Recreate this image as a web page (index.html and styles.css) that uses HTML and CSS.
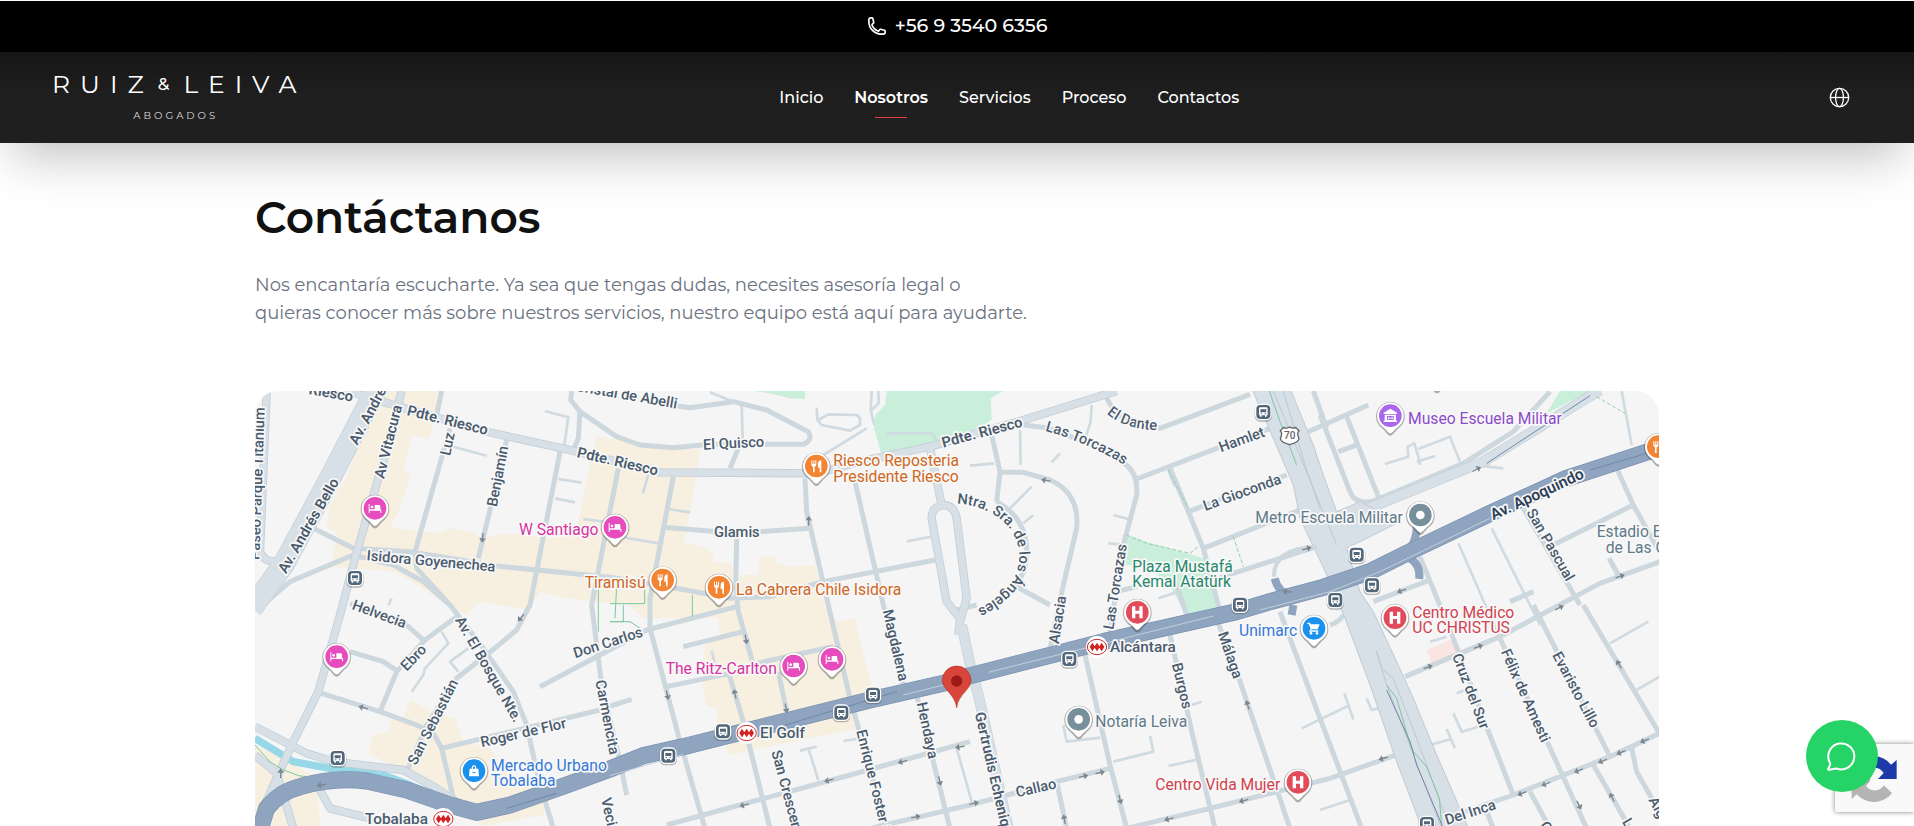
FILE: index.html
```html
<!DOCTYPE html>
<html lang="es">
<head>
<meta charset="utf-8">
<meta name="viewport" content="width=device-width, initial-scale=1">
<title>Contáctanos | Ruiz &amp; Leiva Abogados</title>
<link rel="stylesheet" href="styles.css">
</head>
<body>
<header class="header">
  <div class="topbar">
    <a class="phone" href="tel:+56935406356">
      <svg class="phone-icon" viewBox="0 0 24 24" aria-hidden="true"><path d="M2.25 6.75c0 8.28 6.72 15 15 15h2.25a2.25 2.25 0 0 0 2.25-2.25v-1.37c0-.52-.35-.97-.85-1.1l-4.43-1.1c-.44-.11-.9.05-1.17.41l-.97 1.3c-.28.37-.77.53-1.21.37a12 12 0 0 1-7.14-7.14c-.16-.44 0-.93.37-1.21l1.3-.97c.36-.27.52-.73.41-1.17l-1.1-4.43a1.13 1.13 0 0 0-1.1-.84H4.5A2.25 2.25 0 0 0 2.25 4.5z"/></svg>
      <span>+56 9 3540 6356</span>
    </a>
  </div>
  <div class="navbar">
    <a class="logo" href="#" aria-label="Ruiz &amp; Leiva Abogados">
      <span class="logo-name">RUIZ<span class="logo-amp">&amp;</span>LEIVA</span>
      <span class="logo-sub">ABOGADOS</span>
    </a>
    <nav class="nav" aria-label="Principal">
      <a href="#">Inicio</a>
      <a href="#" class="active">Nosotros</a>
      <a href="#">Servicios</a>
      <a href="#">Proceso</a>
      <a href="#">Contactos</a>
    </nav>
    <div class="lang">
      <button type="button" class="lang-button" aria-label="Idioma">
        <svg viewBox="0 0 24 24" aria-hidden="true"><circle cx="12" cy="12" r="10.5"/><ellipse cx="12" cy="12" rx="4.5" ry="10.5"/><path d="M1.5 12h21"/></svg>
      </button>
    </div>
  </div>
</header>

<main class="content">
  <h1 class="title">Contáctanos</h1>
  <p class="lead">Nos encantaría escucharte. Ya sea que tengas dudas, necesites asesoría legal o<br>quieras conocer más sobre nuestros servicios, nuestro equipo está aquí para ayudarte.</p>
  <div class="map">
    <svg class="map-canvas" viewBox="15 18 4212 1305" preserveAspectRatio="xMidYMin slice" role="img" aria-label="Mapa de la oficina">
      <defs>
        <g id="pin"><path class="pin-shadow" d="M0 60C-8 60-14 46-29 34A43 43 0 1 1 29 34C14 46 8 60 0 60z"/><path class="pin-body" d="M0 53C-6 53-12 41-27 30A40 40 0 1 1 27 30C12 41 6 53 0 53z"/><circle r="34" fill="currentColor"/></g>
        <g id="hotel" class="c-hotel"><use href="#pin"/><path class="glyph" d="M-19-13h3V7h32V-6q0-4-4-4H-1V3h-15v5h-3zM16 4h3v10h-3zM-19 5h3v9h-3z"/><circle class="glyph" cx="-9" cy="-4" r="4"/></g>
        <g id="food" class="c-food"><use href="#pin"/><path class="glyph" d="M-15-17h3v11h3v-11h3v11h3v-11h3v13q0 5-5 6v17h-5V2q-5-1-5-6zM5-10q2-7 10-7v36h-5V5H5z"/></g>
        <g id="hospital" class="c-health"><use href="#pin"/><path class="glyph" d="M-16-18h10V-5H6v-13h10v36H6V4H-6v14h-10z"/></g>
        <g id="dot" class="c-place"><use href="#pin"/><circle class="glyph" r="13"/></g>
        <g id="bus"><rect class="bus-shadow" x="-26" y="-23" width="52" height="51" rx="16"/><rect class="bus-box" x="-23" y="-24" width="46" height="46" rx="14"/><path class="glyph" fill-rule="evenodd" d="M-13-11q0-4 5-4H8q5 0 5 4V9h-3v4H5V9H-5v4h-5V9h-3zM-9-9V0H9v-9zM-8 3h4v3h-4zM4 3h4v3H4z"/></g>
        <g id="metro"><circle class="glyph" r="33"/><ellipse class="metro-ring" rx="29" ry="23"/><path class="metro-mark" d="M-14-13l7 11 7-11 7 11 7-11 8 13-8 13-7-11-7 11-7-11-7 11-8-13z"/></g>
        <path id="arrow" class="arrow" d="M-14-2H2v-8L15 0 2 10V2h-16z"/>
        <path id="torcazas" d="M2385 137Q2520 175 2640 250"/>
        <path id="dante" d="M2570 85Q2630 140 2750 135"/>
        <path id="angeles" d="M2121 356C2230 362 2306 430 2308 510C2308 600 2240 645 2160 685"/>
      </defs>
      <rect class="land" x="0" y="0" width="4260" height="1540"/>
      <path class="beige" d="M395 18H580L535 160 485 152 460 262 482 268 440 395 425 405 430 430 570 445 600 430 660 440 700 460 770 445 900 460 975 450 1040 155 1350 195 1325 350 1300 470 1360 485 1390 510V530L1445 535 1450 570H1525L1530 515H1575L1580 535 1620 545 1695 540 1730 660 1760 710 1815 700 1840 810 1865 900 1820 1000 1825 1030 1435 1110 1420 1035 1405 1030 1400 970 1370 960 1355 900 1370 870 1360 810 1370 780 1410 750 1405 700H1180L1135 660 1080 655 950 640 870 620 835 675 690 650 650 690 610 670 440 560 245 545 260 440 230 430 240 360 290 275 350 120z"/>
      <path class="beige" d="M480 945L555 985 615 1000 640 1070 720 1090 780 1180 900 1210 880 1290 700 1323 620 1260 460 1160 355 1105 370 1050 415 1040 425 1005 460 1000zM15 1080L100 1120 200 1180 210 1330H15z"/>
      <path class="green" d="M1910 18H2260L2222 40 2225 105 2160 145 1895 210 1872 130 1875 90 1905 60zM1510 18H1665V42L1620 40 1560 25zM2630 450L2690 470 2860 520 2880 580 2905 670 2810 695 2760 600 2690 540 2625 540zM3930 18H4030L3970 45 3890 85z"/>
      <path class="pink" d="M3530 795L3610 760 3625 800 3545 840z"/>
      <g class="lanes">
        <path d="M610 185L710 212M925 282L995 293M915 340L975 352M885 78L955 97 940 200M1000 402L1100 415M1125 458L1225 475M1255 372L1320 382M1195 270L1178 325M1380 22L1450 50M1475 60L1478 160M575 740L595 775 525 850 520 870 485 920M655 790L600 830 625 860M1650 1097L1700 1085M1675 1090L1705 1185M1780 1068L1830 1060M2120 1090L2165 1250M2280 370L2345 305M2320 415L2350 390M2310 135L2312 240M2160 242L2232 235M2590 390L2635 402M2575 475L2630 480M2725 640L2780 622M2590 1130L2710 1100 2700 1052M2755 1143L2845 1123M2440 1020L2450 1070 2550 1058M2825 960L2855 950M3155 1030L3300 960M3283 925L3310 1003M3350 940L3365 975 3385 970M3620 925L3660 910M3610 985L3635 1040 3685 1025M3590 1032L3615 1090M3600 1063L3540 1080M3540 770L3590 755M3210 1275L3300 1245M4080 775L4195 710M4160 915L4228 875M3405 237L3475 215 3473 185 3493 175 3505 215 3510 240M3500 230L3555 213M3505 192L3600 155 3630 230M3760 250L3630 235M1700 68L1702 105 1715 120 1800 137 1830 120 1830 100 1820 90 1735 88 1705 105M1720 210L1850 130M1970 469L2045 455M1865 18L1862 75 1873 120M1885 18L1886 55 1865 75M2525 60L2522 110 2500 180M2430 205L2405 232M725 300L730 290M3725 430L3830 640 3870 720M3625 475L3715 680 3750 760M2755 255L2775 305M1385 797L1395 840M4115 18L4145 180M415 660L425 640M1910 145H2035Q2055 145 2058 170"/>
      </g>
      <g class="streets">
        <path d="M575 18L560 90M600 130L495 500 500 550 600 660 700 790 790 920 830 1020 865 1180 910 1330M770 165L685 520M930 200L840 660 800 735 740 785 620 880 530 1020 470 1160M190 430L310 490 480 500 740 543 1080 577 1280 610 1440 640 1560 635 1720 590 2055 525M50 650L120 590 310 510 430 540 520 590 600 660"/>
        <path d="M965 18L962 45 990 80 985 160 970 195M990 80L1100 155 1170 180 1270 188 1380 178 1660 178Q1690 165 1675 140L1550 75 1450 50 1320 68 1260 60M1478 160L1440 250M1270 275L1200 640V730L1290 1070 1365 1330M1105 250L1025 660 1055 900 1110 1130 1130 1230M1240 427L1460 445 1680 430M1460 460L1457 600 1465 680 1510 840M1435 860L1480 1010 1560 1330M1665 280L1670 380 1735 660 1800 940 1820 1010 1910 1330M1815 290L1900 660 1960 900M2000 930L2100 1330"/>
        <path d="M300 655L470 720 525 770M620 695L525 765 440 860 390 980M300 800L400 830 445 860M205 922L390 980 500 1020 550 1045 575 1090 615 1260M575 1090L1050 975M1075 965L1145 943M870 905L1040 815 1190 735 1460 665M1300 785L1480 740M1250 905L1440 865M1520 835L1750 785M1585 860L1610 980M2160 1070L1800 1170 1250 1320M1860 1330L2160 1260 2420 1190 2580 1150M2420 1190L2450 1330"/>
        <path d="M2225 150L2250 260 2240 350M2250 262H2320L2400 285Q2490 325 2480 430L2440 600 2400 790M2320 120L2400 130 2550 190 2630 240Q2665 270 2660 330L2620 480 2580 740M2660 282L2900 190 3060 130M2570 40L2600 90 2730 130 3000 28M2760 250L2815 380 2860 490 2910 680M2815 380L3110 270M2860 490L3150 375M2910 578L3200 485M2240 350Q2330 400 2330 500T2230 660M2300 605L2400 660M2600 620L2660 605M2780 600L2810 690M2505 810L2580 1140 2630 1330M2760 750L2830 1060 2895 1330M2905 715L2960 860 3120 1330M3090 680L3210 1000 3335 1330M2630 1330L2880 1270 3240 1180 3480 1095M3240 720Q3270 710 3280 690M2100 680L2180 660"/>
        <path d="M3175 140L3355 60M3190 18L3230 130M3210 90L3300 320Q3315 360 3370 348L3640 235 3790 140 3900 20M3290 95L3385 335M3265 200L3320 180M4100 250L4150 360 4228 500M3910 480L4150 360M3820 370L3990 660M3510 515L3610 760 3700 1000 3790 1230M3540 585L3370 650M4230 530L4050 595 3750 755 3465 875M4077 520L4105 570M3750 760L4010 1330M3850 660L4080 1115M4000 660L4228 1045M4228 1045L4080 1115 3790 1230 3560 1310M4030 1140L4140 1330M4145 1090L4160 1160 4228 1280M3840 1220L3900 1330M3710 1280L3730 1330M3780 650L3850 620"/>
      </g>
      <path class="river" d="M15 1060L130 1130 240 1150 380 1162 480 1200 620 1260"/>
      <g class="casing">
        <path class="w-xl" d="M380 10L240 280 100 540 5 670"/>
        <path class="w-m" d="M50 18L30 500Q40 530 80 530M455 18L400 230 370 330 315 520 270 690 205 920 125 1080 80 1180 40 1270M15 1025L170 1105 250 1130 460 1155 560 1210 640 1265M15 1110L80 1165 130 1330M210 1215L240 1270 380 1305M270 10L380 45 700 138 960 195 1230 262 1700 265 1850 225 2040 185 2320 105 2600 18M2040 190L2075 360M2125 750L2130 700 2090 650 2045 400Q2045 365 2080 360 2115 362 2120 400L2150 640 2130 710"/>
        <path class="w-l" d="M2135 720L2165 860 2185 930 2275 1330M3270 405L3700 230 4050 15"/>
      </g>
      <g class="avenues">
        <path class="w-xl" d="M380 10L240 280 100 540 5 670"/>
        <path class="w-m" d="M50 18L30 500Q40 530 80 530M455 18L400 230 370 330 315 520 270 690 205 920 125 1080 80 1180 40 1270M15 1025L170 1105 250 1130 460 1155 560 1210 640 1265M15 1110L80 1165 130 1330M210 1215L240 1270 380 1305M270 10L380 45 700 138 960 195 1230 262 1700 265 1850 225 2040 185 2320 105 2600 18M2040 190L2075 360M2125 750L2130 700 2090 650 2045 400Q2045 365 2080 360 2115 362 2120 400L2150 640 2130 710"/>
        <path class="w-l" d="M2135 720L2165 860 2185 930 2275 1330M3270 405L3700 230 4050 15"/>
      </g>
      <path class="ring-road" d="M3005 10L3130 300 3150 400 3240 590 3285 700 3360 900 3440 1130 3520 1340H3660L3560 1110 3490 940 3440 830 3370 680 3330 620 3290 490 3450 410 3330 350 3260 380 3220 270 3190 180 3120 10z"/>
      <path class="land" d="M3296 486L3470 425 3486 445 3480 465 3310 535z"/>
      <path class="lane-line" d="M3070 18L3260 480M3100 18L3165 240 3210 370M3380 800L3395 850 3430 880 3500 1060 3600 1330M3380 800L3410 900 3575 1330"/>
      <path class="trail" d="M3058 18L3090 110 3140 240M3410 900L3440 940 3478 1070 3490 1100 3530 1145 3568 1240 3575 1320M15 1080L60 1130 100 1155 150 1173 205 1177M1045 610V740M1100 600L1095 700M1184 600V656H1080M1120 660V710H1080M1327 630V695M1080 710H1140L1170 730"/>
      <path class="dashes" d="M2630 450L2690 475 2820 505 2845 485M2755 255L2815 370M2950 455L2980 545M4040 35L4125 85"/>
      <path class="highway-line" d="M3410 915L3480 1070 3500 1140 3580 1330M3710 235L4020 32"/>
      <path class="ramp" d="M3200 485Q3070 490 3072 575"/>
      <path class="ramp-blue" d="M3074 580Q3085 625 3130 635M3500 420Q3502 460 3480 490M3480 520Q3512 540 3508 582M3130 660L3125 690"/>
      <path class="highway-edge" d="M25 1350L50 1270Q90 1220 150 1205 250 1175 350 1188L470 1215 600 1260 680 1282 780 1260 950 1200 1080 1152 1180 1112 1300 1085 1500 1035 1860 945 2100 890 2160 872 2560 770 2960 680 3060 650 3210 610 3360 560 3490 495 3710 390 3950 280 4240 185"/>
      <path class="highway" d="M25 1350L50 1270Q90 1220 150 1205 250 1175 350 1188L470 1215 600 1260 680 1282 780 1260 950 1200 1080 1152 1180 1112 1300 1085 1500 1035 1860 945 2100 890 2160 872 2560 770 2960 680 3060 650 3210 610 3360 560 3490 495 3710 390 3950 280 4240 185"/>
      <path class="highway-line" d="M770 1270L920 1225M1540 1040L1940 920M4020 255L4190 205"/>
      <path class="median" d="M1080 1172L1300 1108M1960 930L2080 900M2215 862L2890 693M3030 675L3240 620 3390 560 3720 400"/>
      <g>
        <use href="#arrow" transform="translate(698 458) rotate(95)"/><use href="#arrow" transform="translate(813 698) rotate(130)"/><use href="#arrow" transform="translate(340 968) rotate(196)"/><use href="#arrow" transform="translate(92 1165) rotate(-90)"/><use href="#arrow" transform="translate(215 1200) rotate(170)"/><use href="#arrow" transform="translate(1676 408) rotate(-88)"/><use href="#arrow" transform="translate(1488 763) rotate(80)"/><use href="#arrow" transform="translate(1252 930) rotate(78)"/><use href="#arrow" transform="translate(1455 927) rotate(-103)"/><use href="#arrow" transform="translate(1608 970) rotate(80)"/><use href="#arrow" transform="translate(2130 1086) rotate(170)"/><use href="#arrow" transform="translate(1958 1130) rotate(165)"/><use href="#arrow" transform="translate(1737 1186) rotate(165)"/><use href="#arrow" transform="translate(1483 1260) rotate(165)"/><use href="#arrow" transform="translate(1997 1296) rotate(-12)"/><use href="#arrow" transform="translate(2069 1188) rotate(77)"/><use href="#arrow" transform="translate(2388 286) rotate(190)"/><use href="#arrow" transform="translate(3170 491) rotate(-15)"/><use href="#arrow" transform="translate(3112 620) rotate(185)"/><use href="#arrow" transform="translate(2993 960) rotate(-108)"/><use href="#arrow" transform="translate(2500 1174) rotate(-13)"/><use href="#arrow" transform="translate(2550 1163) rotate(-13)"/><use href="#arrow" transform="translate(2610 1243) rotate(77)"/><use href="#arrow" transform="translate(2443 1303) rotate(-100)"/><use href="#arrow" transform="translate(2981 1247) rotate(165)"/><use href="#arrow" transform="translate(2757 1302) rotate(165)"/><use href="#arrow" transform="translate(3680 253) rotate(-28)"/><use href="#arrow" transform="translate(4110 574) rotate(-18)"/><use href="#arrow" transform="translate(3455 617) rotate(160)"/><use href="#arrow" transform="translate(3534 846) rotate(-20)"/><use href="#arrow" transform="translate(3685 785) rotate(-20)"/><use href="#arrow" transform="translate(3928 668) rotate(-27)"/><use href="#arrow" transform="translate(4107 838) rotate(-120)"/><use href="#arrow" transform="translate(3400 1120) rotate(165)"/><use href="#arrow" transform="translate(3816 1225) rotate(158)"/><use href="#arrow" transform="translate(3888 1197) rotate(158)"/><use href="#arrow" transform="translate(3986 1157) rotate(158)"/><use href="#arrow" transform="translate(4058 1128) rotate(158)"/><use href="#arrow" transform="translate(4113 1102) rotate(158)"/><use href="#arrow" transform="translate(4184 1067) rotate(158)"/><use href="#arrow" transform="translate(3987 1260) rotate(62)"/><use href="#arrow" transform="translate(4086 1237) rotate(-118)"/><use href="#arrow" transform="translate(2172 1255) rotate(-12)"/>
      </g>
      <g class="street-label">
        <text class="major" transform="translate(175 27) rotate(10)">Riesco</text>
        <text class="major" transform="translate(322 182) rotate(-62)">Av. Andrés</text>
        <text class="major" transform="translate(402 283) rotate(-76)">Av Vitacura</text>
        <text class="major" transform="translate(108 568) rotate(-60)">Av. Andrés Bello</text>
        <text transform="translate(28 525) rotate(-88)">Paseo Parque Titanium</text>
        <text class="major" transform="translate(469 90) rotate(14)">Pdte. Riesco</text>
        <text class="major" transform="translate(979 216) rotate(13)">Pdte. Riesco</text>
        <text class="major" transform="translate(2080 188) rotate(-15)">Pdte. Riesco</text>
        <text class="major main" transform="translate(3730 406) rotate(-25)">Av. Apoquindo</text>
        <text transform="translate(600 214) rotate(-78)">Luz</text>
        <text transform="translate(740 367) rotate(-79)">Benjamín</text>
        <text transform="translate(349 526) rotate(5)">Isidora Goyenechea</text>
        <text transform="translate(304 672) rotate(20)">Helvecia</text>
        <text transform="translate(470 860) rotate(-46)">Ebro</text>
        <text transform="translate(614 705) rotate(60)">Av. El Bosque Nte.</text>
        <text transform="translate(498 1143) rotate(-63)">San Sebastián</text>
        <text transform="translate(695 1087) rotate(-13)">Roger de Flor</text>
        <text transform="translate(976 820) rotate(-18)">Don Carlos</text>
        <text transform="translate(1036 888) rotate(79)">Carmencita</text>
        <text transform="translate(1053 1242) rotate(77)">Vecinal</text>
        <text transform="translate(975 17) rotate(10)">Cristal de Abelli</text>
        <text transform="translate(1360 194) rotate(-3)">El Quisco</text>
        <text transform="translate(1392 457)">Glamis</text>
        <text transform="translate(1898 677) rotate(77)">Magdalena</text>
        <text transform="translate(2000 955) rotate(78)">Hendaya</text>
        <text transform="translate(1564 1100) rotate(75)">San Crescente</text>
        <text transform="translate(1819 1038) rotate(76)">Enrique Foster Sur</text>
        <text class="major" transform="translate(2174 985) rotate(77)">Gertrudis Echenique</text>
        <text transform="translate(2301 1237) rotate(-13)">Callao</text>
        <text><textPath href="#torcazas">Las Torcazas</textPath></text>
        <text><textPath href="#dante">El Dante</textPath></text>
        <text><textPath href="#angeles">Ntra. Sra. de los Ángeles</textPath></text>
        <text transform="translate(2913 202) rotate(-20)">Hamlet</text>
        <text transform="translate(2866 378) rotate(-20)">La Gioconda</text>
        <text transform="translate(2426 778) rotate(-81)">Alsacia</text>
        <text transform="translate(2590 735) rotate(-81)">Las Torcazas</text>
        <text transform="translate(2765 838) rotate(76)">Burgos</text>
        <text transform="translate(2903 746) rotate(71)">Málaga</text>
        <text transform="translate(3828 382) rotate(60)">San Pascual</text>
        <text transform="translate(3606 812) rotate(69)">Cruz del Sur</text>
        <text transform="translate(3752 800) rotate(66)">Félix de Amesti</text>
        <text transform="translate(3906 810) rotate(62)">Evaristo Lillo</text>
        <text transform="translate(3590 1320) rotate(-18)">Del Inca</text>
        <text transform="translate(4195 1245) rotate(62)">Algarrobo</text>
        <text transform="translate(4115 1310) rotate(60)">Latadía</text>
        <text transform="translate(3868 1320) rotate(60)">Orinoco</text>
      </g>
      <g class="station-label">
        <text x="345" y="1318">Tobalaba</text><text x="1530" y="1060">El Golf</text><text x="2580" y="802">Alcántara</text>
      </g>
      <g class="place-label">
        <g class="c-hotel"><text x="807" y="450">W Santiago</text><text x="1247" y="866">The Ritz-Carlton</text></g>
        <g class="c-food"><text x="1004" y="608">Tiramisú</text><text x="1458" y="630">La Cabrera Chile Isidora</text><text x="1750" y="243">Riesco Reposteria</text><text x="1750" y="290">Presidente Riesco</text></g>
        <g class="c-shop"><text x="723" y="1157">Mercado Urbano</text><text x="723" y="1203">Tobalaba</text><text x="2967" y="754">Unimarc</text></g>
        <g class="c-health"><text x="3487" y="698">Centro Médico</text><text x="3487" y="745">UC CHRISTUS</text><text x="2716" y="1216">Centro Vida Mujer</text></g>
        <g class="c-park"><text x="2647" y="560">Plaza Mustafá</text><text x="2647" y="606">Kemal Atatürk</text></g>
        <g class="c-museum"><text x="3474" y="116">Museo Escuela Militar</text></g>
        <g class="c-place"><text x="2536" y="1027">Notaría Leiva</text><text x="3016" y="413">Metro Escuela Militar</text><text x="4040" y="456">Estadio Español</text><text x="4067" y="503">de Las Condes</text></g>
      </g>
      <g>
        <use href="#bus" x="315" y="580"/><use href="#bus" x="263" y="1120"/><use href="#bus" x="1255" y="1113"/><use href="#bus" x="1419" y="1040"/><use href="#bus" x="1774" y="984"/><use href="#bus" x="1869" y="930"/><use href="#bus" x="2458" y="823"/><use href="#bus" x="3040" y="82"/><use href="#bus" x="2970" y="660"/><use href="#bus" x="3320" y="510"/><use href="#bus" x="3366" y="602"/><use href="#bus" x="3256" y="646"/><use href="#bus" x="3531" y="1318"/>
        <use href="#metro" x="580" y="1302"/><use href="#metro" x="1490" y="1044"/><use href="#metro" x="2541" y="786"/>
        <use href="#hotel" x="375" y="370"/><use href="#hotel" x="260" y="815"/><use href="#hotel" x="1095" y="427"/><use href="#hotel" x="1631" y="843"/><use href="#hotel" x="1746" y="823"/>
        <use href="#food" x="1238" y="585"/><use href="#food" x="1407" y="607"/><use href="#food" x="1699" y="243"/><use href="#food" x="4225" y="185"/>
        <use href="#hospital" x="2662" y="682"/><use href="#hospital" x="3435" y="698"/><use href="#hospital" x="3144" y="1192"/>
        <use href="#dot" x="2486" y="1003"/><use href="#dot" x="3511" y="390"/><use href="#dot" x="3561" y="-35"/>
        <g class="c-museum" transform="translate(3421 92)"><use href="#pin"/><path class="glyph" fill-rule="evenodd" d="M0-21L20-9V-5H-20V-9zM-17-3H17V15H20V19H-20V15H-17zM-10 1V13H10V1zM-7 11V3L0 7 7 3V11H4V7L0 10-4 7V11z"/></g>
        <g class="c-shop" transform="translate(672 1157)"><use href="#pin"/><path class="glyph" fill-rule="evenodd" d="M-15 17L-13-6H-7V-9Q-6-17 0-17T7-9V-6H13L15 17zM-3-6H3V-9Q2-13 0-13T-3-9zM-6 3Q0 13 6 3H3Q0 7-3 3z"/></g>
        <g class="c-shop" transform="translate(3192 730)"><use href="#pin"/><path class="glyph" d="M-20-17H-12L-10-12H17L11 3H-7L-9 6H13V10H-15L-10 1-16-13H-20z"/><circle class="glyph" cx="-9" cy="15" r="4"/><circle class="glyph" cx="9" cy="15" r="4"/></g>
        <g transform="translate(3119 152)"><path class="shield" d="M-18-25Q-10-20 0-26 10-20 18-25L28-15Q20-7 28 8 28 20 0 27-28 20-28 8-20-7-28-15z"/><text class="shield-text" y="11">70</text></g>
        <g transform="translate(2120 888)"><path class="marker" d="M0 80C-4 40-43 26-43-2A43 43 0 1 1 43-2C43 26 4 40 0 80z"/><circle class="marker-core" r="17"/></g>
      </g>
    </svg>
  </div>
</main>

<aside class="recaptcha" aria-label="reCAPTCHA">
  <svg viewBox="-72 -72 144 144" aria-hidden="true"><path class="rc-light" d="M-69 0A69 69 0 0 1 0-69V-30A30 30 0 0 0-24-16L-12 0z"/><path class="rc-blue" d="M0-69A69 69 0 0 1 51-43L68-57V0H12L29-18A34 34 0 0 0 0-34z"/><path class="rc-gray" d="M-67 0V60L-52 46A70 70 0 0 0 54 43L30 19A32 32 0 0 1-24 20L-14 10-10 0z"/></svg>
</aside>
<a class="whatsapp" href="#" aria-label="WhatsApp">
  <svg viewBox="0 0 32 32" aria-hidden="true"><path d="M3.300 21.500A13 13 0 1 1 10.500 28.500L3.200 29.800Q1.800 30 2.300 28.600L4.200 24.600Q4.500 23.800 3.300 21.500z"/></svg>
</a>
</body>
</html>
```

FILE: styles.css
```css
* { box-sizing: border-box; }
body {
  display: flex;
  flex-direction: column;
  margin: 0;
  padding-top: 1px;
  min-height: 100vh;
  background: #fff;
  color: #111;
  font-family: Montserrat, Inter, "Open Sans", sans-serif;
}
a { color: inherit; text-decoration: none; }

.header { position: relative; box-shadow: 0 25px 50px -12px rgba(0, 0, 0, .25); }
.topbar {
  display: flex;
  justify-content: center;
  align-items: center;
  height: 51px;
  background: #000;
  color: #fff;
}
.phone { display: flex; align-items: center; gap: 8px; padding-bottom: 2px; font-size: 19px; font-weight: 500; line-height: 28px; }
.phone-icon { width: 20px; height: 20px; fill: none; stroke: currentColor; stroke-width: 2; stroke-linejoin: round; }
.navbar {
  display: flex;
  justify-content: space-between;
  align-items: center;
  height: 91px;
  padding: 0 64px 0 52px;
  background: linear-gradient(#161616, #1f1f1f 50%);
  color: #fff;
}
.logo { display: flex; flex-direction: column; align-items: center; gap: 14px; margin-top: -2px; }
.logo-name { display: flex; align-items: center; font-size: 25px; line-height: 24px; letter-spacing: 10px; margin-right: -10px; }
.logo-amp { margin: 0 4px; font-size: 17px; font-weight: 500; }
.logo-sub { font-size: 10px; line-height: 12px; letter-spacing: 3px; margin-right: -3px; color: #ddd; }
.nav { display: flex; gap: 31px; font-size: 16px; font-weight: 500; line-height: 24px; }
.nav .active { position: relative; font-weight: 600; }
.nav .active::after {
  content: "";
  position: absolute;
  left: 50%;
  bottom: -8px;
  width: 32px;
  height: 1px;
  margin-left: -16px;
  background: #e53e3e;
}
.lang { display: flex; justify-content: flex-end; min-width: 128px; }
.lang-button { display: flex; padding: 0; border: 0; background: none; color: #fff; cursor: pointer; }
.lang-button svg { width: 21px; height: 21px; fill: none; stroke: currentColor; stroke-width: 1.5; }

.content {
  flex: 1;
  display: flex;
  flex-direction: column;
  width: 100%;
  max-width: 1452px;
  margin: 0 auto;
  padding: 48px 24px 0;
}
.title { margin: 0; font-size: 44px; line-height: 52px; font-weight: 600; color: #111; }
.lead { margin: 28px 0 64px; font-size: 18px; line-height: 28px; font-weight: 400; color: #6b7280; }
.map { position: relative; flex: 1; min-height: 400px; border-radius: 24px 24px 0 0; overflow: hidden; }
.map-canvas { position: absolute; width: 100%; height: 100%; font-family: Roboto, sans-serif; font-size: 46px; }

.land { fill: #f5f5f5; }
.beige { fill: #f7efdf; }
.green { fill: #c9efdb; }
.pink { fill: #fbe5e3; }
.river, .lanes, .streets, .avenues, .casing, .lane-line, .trail, .dashes, .ramp, .ramp-blue,
.highway, .highway-edge, .highway-line, .median { fill: none; stroke-linejoin: round; }
.lanes { stroke: #d0dae1; stroke-width: 8; }
.streets { stroke: #cdd7de; stroke-width: 15; }
.river { stroke: #96d8e8; stroke-width: 22; }
.casing { stroke: #c3ced7; }
.avenues { stroke: #d8e0e7; }
.casing .w-m { stroke-width: 25; }
.avenues .w-m { stroke-width: 20; }
.casing .w-l { stroke-width: 32; }
.avenues .w-l { stroke-width: 28; }
.casing .w-xl { stroke-width: 66; }
.avenues .w-xl { stroke-width: 62; }
.ring-road { fill: #d8e0e7; stroke: #bfcad3; stroke-width: 3; }
.lane-line { stroke: #bcc7d0; stroke-width: 3; }
.trail { stroke: #78c9a0; stroke-width: 3; }
.dashes { stroke: #8fcfb0; stroke-width: 3; stroke-dasharray: 12 6; }
.ramp { stroke: #cdd7de; stroke-width: 12; }
.ramp-blue { stroke: #8fa4bf; stroke-width: 24; }
.highway-edge { stroke: #7990b0; stroke-width: 51; }
.highway { stroke: #8fa4bf; stroke-width: 47; }
.highway-line { stroke: #7188a9; stroke-width: 3; }
.median { stroke: #c5cfd9; stroke-width: 3; }
.arrow { fill: #7b868f; }

.street-label, .station-label, .place-label {
  paint-order: stroke;
  stroke: #f8f8f8;
  stroke-width: 10;
  stroke-linejoin: round;
}
.street-label, .station-label { fill: #4a5b6e; font-size: 44px; font-weight: 500; }
.street-label .major { font-weight: 600; }
.street-label .main { fill: #2f3f57; font-size: 47px; }
.station-label { font-size: 46px; }
.place-label { fill: currentColor; font-size: 47px; }
.c-hotel { color: #e64cbb; }
.c-food { color: #f28432; }
.c-health { color: #e24b59; }
.c-place { color: #78909c; }
.c-shop { color: #1a91ee; }
.c-museum { color: #a967ec; }
.place-label .c-hotel { color: #d6339f; }
.place-label .c-food { color: #cf671d; }
.place-label .c-health { color: #d0414f; }
.place-label .c-place { color: #5f7a88; }
.place-label .c-shop { color: #3578d8; }
.place-label .c-park { color: #26876a; }
.place-label .c-museum { color: #8c4bcb; }

.pin-shadow { fill: rgba(60, 60, 60, .4); }
.pin-body, .glyph { fill: #fff; }
.bus-shadow { fill: rgba(60, 60, 60, .35); }
.bus-box { fill: #52677a; stroke: #fff; stroke-width: 4; }
.metro-ring { fill: none; stroke: #cc2a2a; stroke-width: 3; }
.metro-mark { fill: #d32222; }
.shield { fill: #fff; stroke: #5f6368; stroke-width: 4; }
.shield-text { font-size: 30px; font-weight: 500; fill: #5f6368; text-anchor: middle; }
.marker { fill: #d8453a; stroke: #b8332a; stroke-width: 2; }
.marker-core { fill: #9c1b17; }

.recaptcha {
  position: fixed;
  right: 0;
  bottom: 14px;
  width: 79px;
  height: 68px;
  padding: 11px 15px;
  background: #f9f9f9;
  border-radius: 2px 0 0 2px;
  box-shadow: 0 0 5px gray;
}
.recaptcha svg { display: block; width: 48px; height: 48px; }
.rc-light { fill: #4a90e2; }
.rc-blue { fill: #1c3aa9; }
.rc-gray { fill: #b4b4b4; }
.whatsapp {
  position: fixed;
  right: 36px;
  bottom: 34px;
  display: flex;
  align-items: center;
  justify-content: center;
  width: 72px;
  height: 72px;
  border-radius: 50%;
  background: #25d366;
}
.whatsapp svg { width: 32px; height: 32px; fill: none; stroke: #fff; stroke-width: 2; stroke-linejoin: round; }
```
